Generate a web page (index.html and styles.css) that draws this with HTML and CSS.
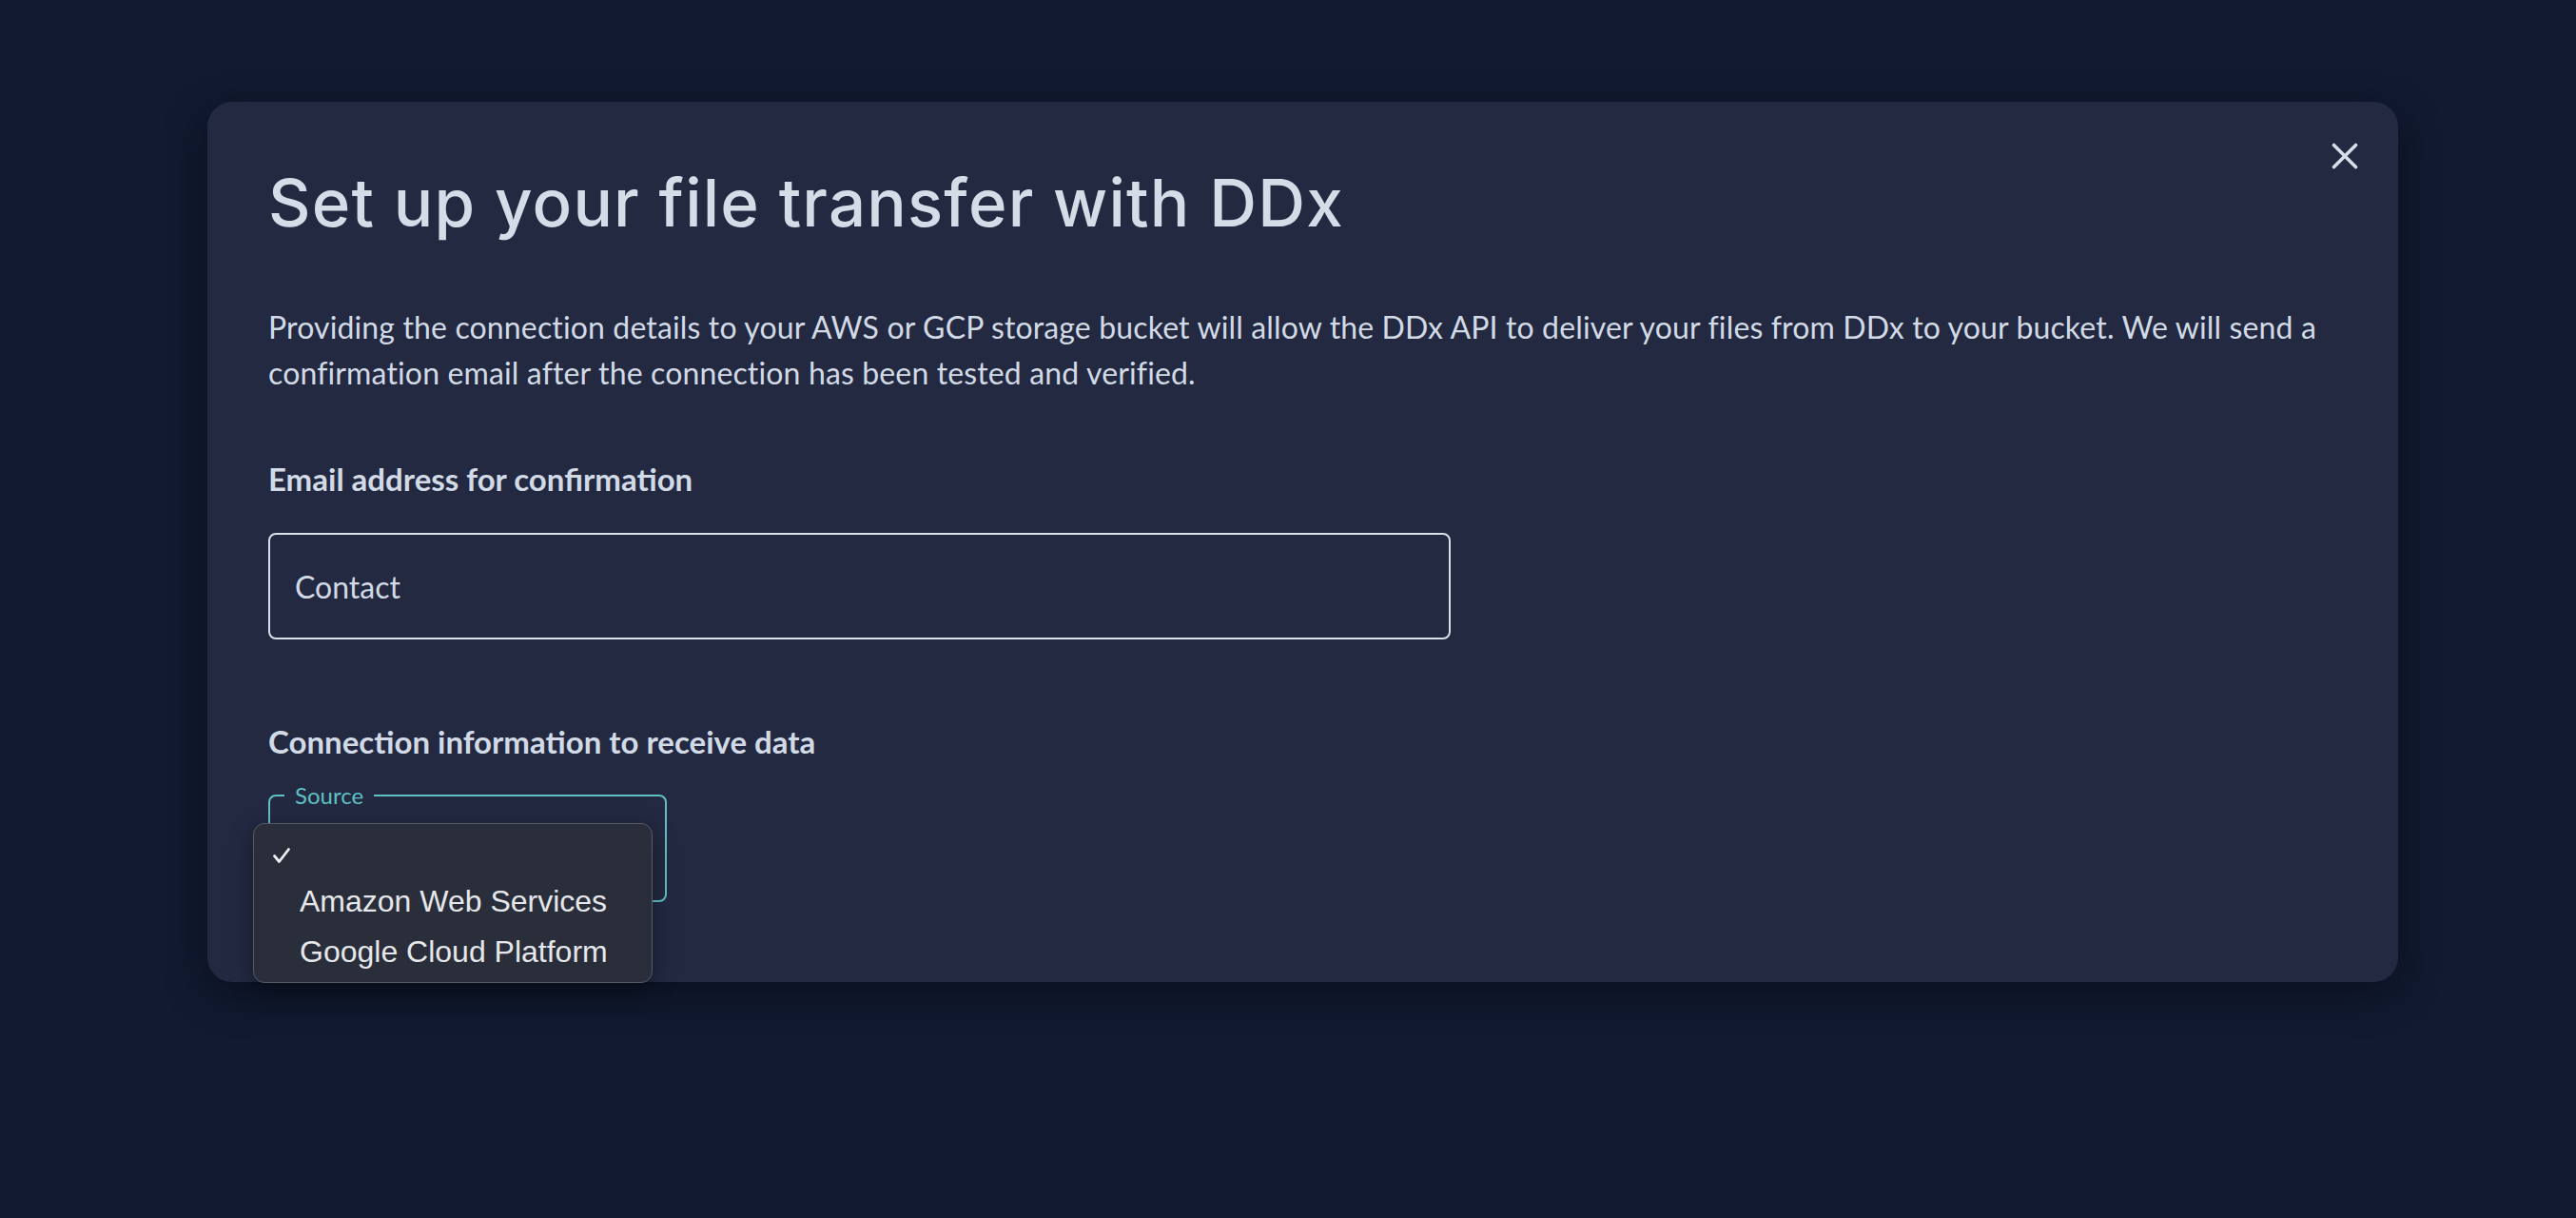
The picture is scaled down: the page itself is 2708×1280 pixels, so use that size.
FILE: index.html
```html
<!DOCTYPE html>
<html lang="en">
<head>
<meta charset="utf-8">
<title>Set up your file transfer with DDx</title>
<link rel="stylesheet" href="styles.css">
</head>
<body>
<div class="page">
  <div class="modal">
    <button class="close" aria-label="Close">
      <svg width="28" height="28" viewBox="0 0 28 28"><path d="M2.5 2.5 L25.5 25.5 M25.5 2.5 L2.5 25.5" stroke="#d6dee9" stroke-width="3.6" stroke-linecap="round"/></svg>
    </button>
    <h1 class="title">Set up your file transfer with DDx</h1>
    <p class="intro">Providing the connection details to your AWS or GCP storage bucket will allow the DDx API to deliver your files from DDx to your bucket. We will send a confirmation email after the connection has been tested and verified.</p>
    <div class="label">Email address for confirmation</div>
    <div class="input">Contact</div>
    <div class="label label-conn">Connection information to receive data</div>
    <div class="select-wrap">
      <fieldset class="source">
        <legend>Source</legend>
      </fieldset>
      <div class="menu">
        <div class="opt"><svg class="check" width="20" height="18" viewBox="0 0 20 18"><path d="M2.5 9.5 L7.5 15.5 L17.5 2.5" fill="none" stroke="#eceef1" stroke-width="2.8" stroke-linecap="round" stroke-linejoin="round"/></svg></div>
        <div class="opt opt-mid">Amazon Web Services</div>
        <div class="opt opt-last">Google Cloud Platform</div>
      </div>
    </div>
  </div>
</div>
</body>
</html>
```

FILE: styles.css
```css
html, body {
  margin: 0;
  padding: 0;
  background: #111a2f;
  height: 100%;
}
body {
  font-family: Lato, "Liberation Sans", sans-serif;
  color: #d2dae6;
}
.page {
  padding: 107px 0 0 218px;
}
.modal {
  position: relative;
  width: 2303px;
  box-sizing: border-box;
  background: #222941;
  border-radius: 26px;
  padding: 72px 64px 84px 64px;
  box-shadow: 0 12px 40px rgba(5, 10, 22, 0.55);
}
.close {
  position: absolute;
  top: 43px;
  right: 42px;
  width: 28px;
  height: 28px;
  padding: 0;
  border: 0;
  background: transparent;
  display: flex;
}
.title {
  margin: 0;
  font-family: Inter, sans-serif;
  font-weight: 500;
  font-size: 69px;
  line-height: 69px;
  color: #d4dce8;
  letter-spacing: 1.2px;
}
.intro {
  margin: 72px 0 0 0;
  font-size: 32px;
  line-height: 48px;
  color: #d2dae6;
  letter-spacing: 0.14px;
}
.label {
  margin-top: 64px;
  font-weight: 700;
  font-size: 33px;
  line-height: 47px;
  color: #d2dae6;
}
.input {
  margin-top: 33px;
  width: 1243px;
  height: 112px;
  box-sizing: border-box;
  border: 2px solid #d8dfea;
  border-radius: 8px;
  display: flex;
  align-items: center;
  padding: 0 26px;
  font-size: 32px;
  color: #d2dae6;
}
.label-conn {
  margin-top: 84px;
}
.select-wrap {
  position: relative;
  margin-top: 19px;
  width: 419px;
}
.source {
  margin: 0;
  padding: 0;
  height: 126px;
  box-sizing: border-box;
  border: 2px solid #5fc0c3;
  border-radius: 8px;
}
.source legend {
  margin-left: 15px;
  padding: 0 11px;
  font-size: 24px;
  line-height: 28px;
  color: #5fc0c3;
}
.menu {
  position: absolute;
  top: 43px;
  left: -16px;
  width: 420px;
  box-sizing: border-box;
  padding: 8px 0 8px 0;
  background: #2a2e3b;
  border: 1.5px solid #575a63;
  border-radius: 12px;
  box-shadow: 0 8px 24px rgba(0, 0, 0, 0.35);
  font-family: "Liberation Sans", Arial, sans-serif;
  font-size: 32px;
  color: #e6e7ea;
}
.opt {
  height: 50px;
  display: flex;
  align-items: center;
  padding-left: 48px;
  position: relative;
  box-sizing: border-box;
}
.opt-mid {
  padding-bottom: 3px;
}
.opt-last {
  padding-top: 2px;
}
.check {
  position: absolute;
  left: 19px;
  top: 16px;
}
```
